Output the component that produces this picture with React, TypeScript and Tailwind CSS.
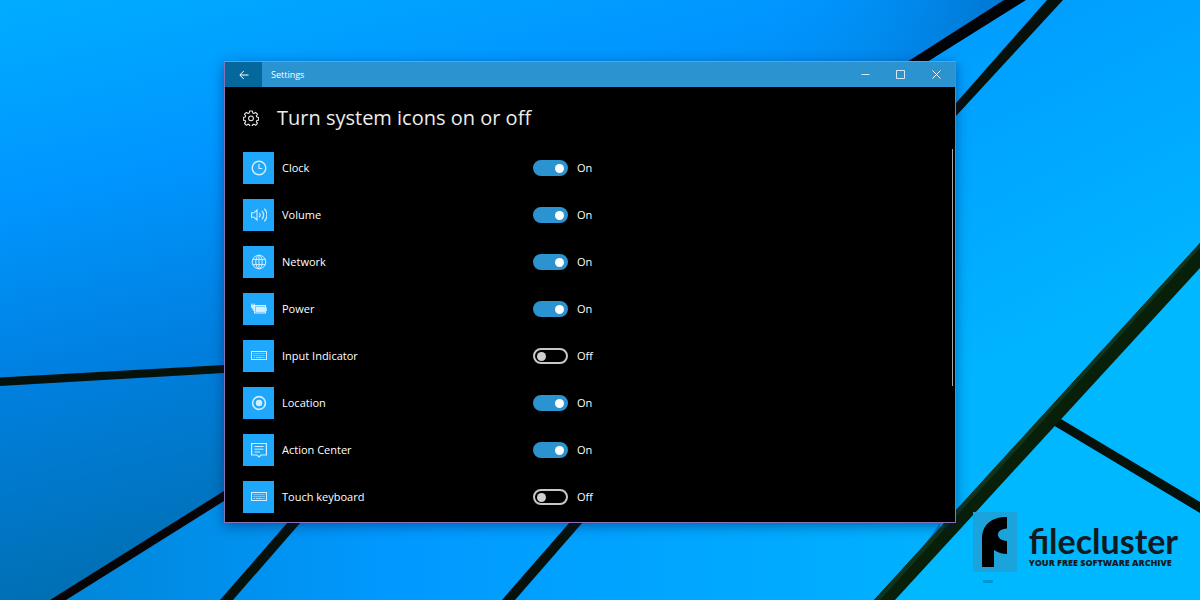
import { useState, type ReactNode } from 'react';

type IconItem = {
  id: string;
  label: string;
  on: boolean;
  icon: ReactNode;
};

const keyboardIcon = (
  <>
    <rect x="0.5" y="3.5" width="15" height="8" />
    <path d="M2.5 5.5h11M2.5 7.5h11" strokeDasharray="1.2 0.8" strokeOpacity="0.7" />
    <path d="M2.500 9.500h1.500M5 9.500h6M12 9.500h1.500" strokeOpacity="0.7" />
  </>
);

const SYSTEM_ICONS: IconItem[] = [
  {
    id: 'clock',
    label: 'Clock',
    on: true,
    icon: (
      <>
        <circle cx="8" cy="8" r="6.8" strokeWidth="1.4" />
        <path d="M8 4v4.5h3.2" strokeWidth="1.2" />
      </>
    ),
  },
  {
    id: 'volume',
    label: 'Volume',
    on: true,
    icon: (
      <>
        <path d="M0.6 5.800h2.400L6 3v10L3 10.200H0.6z" strokeWidth="1.1" />
        <path d="M8.4 6a3.200 3.200 0 0 1 0 4M10.900 3.800a6 6 0 0 1 0 8.400M13.300 1.600a9 9 0 0 1 0 12.800" strokeWidth="1.2" />
      </>
    ),
  },
  {
    id: 'network',
    label: 'Network',
    on: true,
    icon: (
      <>
        <circle cx="8" cy="8" r="6.8" />
        <ellipse cx="8" cy="8" rx="3.2" ry="6.8" />
        <path d="M8 1.2v13.6M1.8 5.4h12.4M1.8 10.6h12.4" />
      </>
    ),
  },
  {
    id: 'power',
    label: 'Power',
    on: true,
    icon: (
      <>
        <rect x="3.5" y="4.500" width="11" height="7.500" />
        <rect x="5" y="6" width="8.400" height="4.800" fill="currentColor" />
        <path d="M15.300 6.600v3.400" />
        <path d="M0.8 2.500v2M3.200 2.500v2M0.300 4.200h3.600v1.800L2.600 7.400H1.600L0.300 6.200zM2.100 7.400v1.600l1.400 1" fill="currentColor" />
      </>
    ),
  },
  { id: 'input-indicator', label: 'Input Indicator', on: false, icon: keyboardIcon },
  {
    id: 'location',
    label: 'Location',
    on: true,
    icon: (
      <>
        <circle cx="8" cy="8" r="6.4" strokeWidth="1.6" />
        <circle cx="8" cy="8" r="3.2" fill="currentColor" stroke="none" />
      </>
    ),
  },
  {
    id: 'action-center',
    label: 'Action Center',
    on: true,
    icon: (
      <>
        <path d="M0.6 1.5h14.8v11.5H10L8 15l-2-2H0.6z" strokeWidth="1.2" />
        <path d="M3.5 4.5h9M3.5 7.2h9M3.5 10h5.5" />
      </>
    ),
  },
  { id: 'touch-keyboard', label: 'Touch keyboard', on: false, icon: keyboardIcon },
];

function Wallpaper() {
  return (
    <svg
      className="absolute inset-0 h-full w-full"
      viewBox="0 0 1200 600"
      preserveAspectRatio="xMidYMid slice"
      aria-hidden="true"
    >
      <defs>
        <linearGradient id="sky" gradientUnits="userSpaceOnUse" x1="0" y1="0" x2="90" y2="380">
          <stop offset="0" stopColor="#00adff" />
          <stop offset="0.5" stopColor="#0096ff" />
          <stop offset="1" stopColor="#007edd" />
        </linearGradient>
        <linearGradient id="top" gradientUnits="userSpaceOnUse" x1="760" y1="0" x2="970" y2="50">
          <stop offset="0" stopColor="#0094ff" stopOpacity="0" />
          <stop offset="1" stopColor="#007cd8" />
        </linearGradient>
        <linearGradient id="shade" gradientUnits="userSpaceOnUse" x1="60" y1="370" x2="110" y2="580">
          <stop offset="0" stopColor="#0080e0" />
          <stop offset="1" stopColor="#0070b5" />
        </linearGradient>
        <linearGradient id="floor" gradientUnits="userSpaceOnUse" x1="90" y1="0" x2="940" y2="0">
          <stop offset="0" stopColor="#0088dc" />
          <stop offset="0.35" stopColor="#0099ff" />
          <stop offset="1" stopColor="#00b2ff" />
        </linearGradient>
        <linearGradient id="right" gradientUnits="userSpaceOnUse" x1="980" y1="30" x2="1120" y2="300">
          <stop offset="0" stopColor="#009eff" />
          <stop offset="1" stopColor="#00b4ff" />
        </linearGradient>
      </defs>
      <rect width="1200" height="600" fill="url(#sky)" />
      <path d="M500 0h520L900 70H500z" fill="url(#top)" />
      <path d="M0 381L224 369V495L55 600H0z" fill="url(#shade)" />
      <path d="M55 600L224 495H960L885 600z" fill="url(#floor)" />
      <path d="M1016 0H1200V255L885 600H940V300L900 70z" fill="url(#right)" />
      <path d="M1200 255V600H885z" fill="#00b8ff" />
      <g fill="#07110b">
        <path d="M0 377.5L224 365V373L0 386z" />
        <path d="M224 491V501L66 600H50z" fill="#080406" />
        <path d="M288 522H301L233 600H220z" />
        <path d="M570 522H583L515 600H502z" />
        <path d="M1004 0H1026L927 62H907z" fill="#020306" />
        <path d="M1047 0H1063L956 116V103z" />
        <path d="M1053 425L1061 419L1200 502V513z" />
        <path d="M1200 243V268L895 600H874z" fill="#08200a" />
        <path d="M1200 243V248L880 600H874z" fill="#10351f" />
      </g>
    </svg>
  );
}

function TitleBar() {
  return (
    <header className="flex h-[25px] items-stretch bg-[#2b93cf] text-white">
      <button type="button" aria-label="Back" className="flex w-[37px] items-center justify-center bg-[#05689c]">
        <svg className="h-[10px] w-[10px]" viewBox="0 0 10 10" fill="none" stroke="currentColor" aria-hidden="true">
          <path d="M9.5 5H1M4.8 1L0.8 5l4 4" />
        </svg>
      </button>
      <span className="flex flex-1 items-center pl-[9px] text-[9px]">Settings</span>
      <button type="button" aria-label="Minimize" className="flex w-[35px] items-center justify-center">
        <svg className="h-[9px] w-[9px]" viewBox="0 0 9 9" fill="none" stroke="currentColor" strokeOpacity="0.8" aria-hidden="true">
          <path d="M0.5 4.5h8" />
        </svg>
      </button>
      <button type="button" aria-label="Maximize" className="flex w-[35px] items-center justify-center">
        <svg className="h-[9px] w-[9px]" viewBox="0 0 9 9" fill="none" stroke="currentColor" strokeOpacity="0.8" aria-hidden="true">
          <path d="M0.5 0.5h8v8h-8z" />
        </svg>
      </button>
      <button type="button" aria-label="Close" className="flex w-[37px] items-center justify-center">
        <svg className="h-[9px] w-[9px]" viewBox="0 0 9 9" fill="none" stroke="currentColor" aria-hidden="true">
          <path d="M0.5 0.5l8 8M8.5 0.5l-8 8" />
        </svg>
      </button>
    </header>
  );
}

function IconRow({ item, onToggle }: { item: IconItem; onToggle: (id: string) => void }) {
  return (
    <li className="flex h-8 items-center">
      <span className="flex h-8 w-[31px] items-center justify-center bg-[#1fa8fb] text-[#d3efff]">
        <svg className="h-4 w-4" viewBox="0 0 16 16" fill="none" stroke="currentColor" aria-hidden="true">
          {item.icon}
        </svg>
      </span>
      <label htmlFor={item.id} className="w-[259px] pl-2">
        {item.label}
      </label>
      <input
        id={item.id}
        type="checkbox"
        role="switch"
        checked={item.on}
        onChange={() => onToggle(item.id)}
        className="flex h-4 w-[35px] appearance-none items-center rounded-full border-2 border-[#c8c8c8] px-[2px] before:h-[9px] before:w-[9px] before:rounded-full before:bg-[#d0d0d0] checked:justify-end checked:border-[#2b93cf] checked:bg-[#2b93cf] checked:before:bg-white"
      />
      <span className="pl-[9px]">{item.on ? 'On' : 'Off'}</span>
    </li>
  );
}

function Brand() {
  return (
    <a href="#filecluster" className="absolute right-[22px] bottom-7 flex gap-3 text-[#101a20]">
      <svg className="h-[60px] w-11 overflow-visible" viewBox="0 0 44 60" aria-hidden="true">
        <rect width="44" height="60" fill="#1ba3dc" />
        <path
          d="M9 55V27C9 13 18 5 34 5V16.500C28 17 25 19 25 22.500C25 26 28 28.500 34 29V42C30 42 26 41 21 38V55z"
          fill="#000"
        />
        <rect x="10" y="68" width="10" height="3" rx="1" fill="#0a5a80" fillOpacity="0.35" />
      </svg>
      <span className="flex flex-col justify-end pb-1">
        <span className="font-['Lato'] text-[34px] leading-[34px] font-bold">filecluster</span>
        <span className="font-['Open_Sans'] text-[9px] leading-[10px] font-extrabold">YOUR FREE SOFTWARE ARCHIVE</span>
      </span>
    </a>
  );
}

export default function App() {
  const [items, setItems] = useState(SYSTEM_ICONS);

  const toggle = (id: string) => {
    setItems((prev) => prev.map((item) => (item.id === id ? { ...item, on: !item.on } : item)));
  };

  return (
    <div className="relative min-h-screen overflow-hidden bg-[#0095ff] pt-[61px] pr-[244px] pb-[77px] pl-[224px] font-['Open_Sans',sans-serif]">
      <Wallpaper />
      <main className="relative border border-[#8a72b8] border-t-[#4fa9da] bg-black text-white shadow-[0_3px_12px_rgba(0,20,80,0.45)]">
        <TitleBar />
        <h1 className="flex items-center gap-[18px] pt-4 pl-[18px] text-[20px] leading-[30px] text-[#ececec]">
          <svg
            className="h-4 w-4"
            viewBox="0 0 24 24"
            fill="none"
            stroke="currentColor"
            strokeWidth="1.6"
            strokeLinejoin="round"
            aria-hidden="true"
          >
            <path d="M10 1.500h4l.6 3 1.700.7 2.600-1.700 2.800 2.800-1.700 2.600.7 1.700 2.800.6v4l-2.800.6-.7 1.700 1.700 2.600-2.800 2.800-2.600-1.700-1.700.7-.6 2.600h-4l-.6-2.600-1.700-.7-2.600 1.700-2.800-2.800 1.700-2.600-.7-1.700-2.800-.6v-4l2.800-.6.7-1.700-1.700-2.600 2.800-2.800 2.600 1.700 1.700-.7z" />
            <circle cx="12" cy="12.500" r="3.600" />
          </svg>
          Turn system icons on or off
        </h1>
        <div className="flex pt-4 pr-[2px]">
          <ul className="flex flex-1 flex-col gap-[15px] pt-[3px] pb-[9px] pl-[18px] text-[11px] leading-4">
            {items.map((item) => (
              <IconRow key={item.id} item={item} onToggle={toggle} />
            ))}
          </ul>
          <div className="h-[237px] w-px bg-[#a8a8a8]" />
        </div>
      </main>
      <Brand />
    </div>
  );
}
